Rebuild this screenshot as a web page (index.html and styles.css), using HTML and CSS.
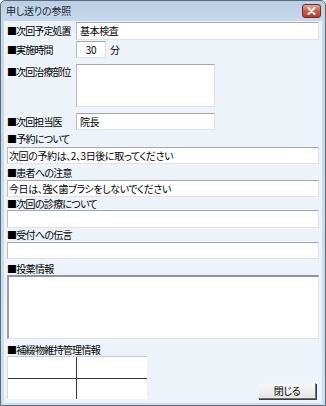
FILE: index.html
```html
<!DOCTYPE html>
<html lang="ja">
<head>
<meta charset="UTF-8">
<title>申し送りの参照</title>
<link rel="stylesheet" href="styles.css">
</head>
<body>

<!-- Dialog Window -->
<div class="window">
    <div class="titlebar">
        <span class="title">申し送りの参照</span>
        <span class="close">
            <svg width="9" height="8" viewBox="0 0 9 8"><path d="M1.5 1 L7.5 7 M7.5 1 L1.5 7" stroke="#fff" stroke-width="2" stroke-linecap="round"/></svg>
        </span>
    </div>

    <div class="client">
        <div class="row r1">
            <label class="lbl">■次回予定処置</label>
            <div class="box wide">基本検査</div>
        </div>

        <div class="row r2">
            <label class="lbl">■実施時間</label>
            <div class="box num">30</div>
            <span class="unit">分</span>
        </div>

        <div class="row r3">
            <label class="lbl">■次回治療部位</label>
            <div class="box mid tall"></div>
        </div>

        <div class="row r4">
            <label class="lbl">■次回担当医</label>
            <div class="box mid">院長</div>
        </div>

        <div class="block b1">
            <label class="head">■予約について</label>
            <div class="box full">次回の予約は、2、3日後に取ってください</div>
        </div>

        <div class="block b2">
            <label class="head">■患者への注意</label>
            <div class="box full">今日は、強く歯ブラシをしないでください</div>
        </div>

        <div class="block b3">
            <label class="head">■次回の診療について</label>
            <div class="box full h18"></div>
        </div>

        <div class="block b4">
            <label class="head">■受付への伝言</label>
            <div class="box full"></div>
        </div>

        <div class="block b5">
            <label class="head">■投薬情報</label>
            <div class="box full memo"></div>
        </div>

        <div class="bottom">
            <div class="block">
                <label class="head">■補綴物維持管理情報</label>
                <div class="grid">
                    <div class="cell"></div>
                    <div class="cell"></div>
                    <div class="cell"></div>
                    <div class="cell"></div>
                </div>
            </div>
            <button class="btn">閉じる</button>
        </div>
    </div>
</div>

</body>
</html>
```

FILE: styles.css
```css
/* General */
* {
    margin: 0;
    padding: 0;
    box-sizing: border-box;
}

body {
    width: 326px;
    height: 406px;
    overflow: hidden;
    font-family: "Noto Sans CJK JP", "Liberation Sans", sans-serif;
    font-size: 10px;
    font-feature-settings: "palt" 1;
    letter-spacing: -0.4px;
    color: #000;
    background: #fff;
}

/* Window frame */
.window {
    width: 326px;
    height: 406px;
    border: 1px solid #5b6b7c;
    border-radius: 5px 5px 0 0;
    background: linear-gradient(to bottom, #bcd0e5, #c6d9ec 20px, #cddff1);
    padding: 0 3px 2px 3px;
    display: flex;
    flex-direction: column;
}

.titlebar {
    flex-shrink: 0;
    height: 20px;
    display: flex;
    align-items: center;
    justify-content: space-between;
    padding: 0 1px 0 2px;
}

.title {
    color: #1b2633;
    line-height: 1;
    letter-spacing: -0.2px;
}

.close {
    width: 19px;
    height: 14px;
    border: 1px solid #6c2a20;
    border-radius: 3px;
    background: linear-gradient(to bottom, #e8a592, #d0634c 45%, #b83c24);
    display: flex;
    align-items: center;
    justify-content: center;
}

/* Client area */
.client {
    flex: 1;
    min-height: 0;
    overflow: hidden;
    background: #edf3f9;
    padding: 0 3px 0 3px;
    display: flex;
    flex-direction: column;
}

.row {
    display: flex;
    align-items: center;
    flex-shrink: 0;
}

.lbl {
    width: 69px;
    line-height: 12px;
    letter-spacing: -0.9px;
    white-space: nowrap;
}

.head {
    display: block;
    line-height: 12px;
    height: 12px;
    letter-spacing: -0.7px;
    white-space: nowrap;
}

/* Text boxes */
.box {
    flex-shrink: 0;
    background: #fff;
    border: 1px solid #dfe3e8;
    border-top-color: #a3a8ae;
    border-left-color: #b9bdc2;
    height: 17px;
    padding: 0 3px;
    line-height: 15px;
    white-space: nowrap;
    overflow: hidden;
}

.wide { width: 243px; height: 18px; line-height: 16px; }
.mid { width: 139px; }
.tall { height: 43px; }
.full { width: 312px; padding: 0 1px; }
.h18 { height: 18px; }
.memo {
    height: 64px;
    border-top: 2px solid #8e949b;
    border-left: 2px solid #9aa0a6;
}

.num {
    width: 30px;
    text-align: center;
}

.unit {
    margin-left: 4px;
}

.r1 { margin-top: 1px; }
.r2 { margin-top: 1px; }
.r3 { margin-top: 6px; align-items: flex-start; }
.r3 .lbl { margin-top: 2px; }
.r4 { margin-top: 6px; }

.b1 { margin-top: 3px; }
.b1 .head { margin-bottom: 2px; }
.b2 { margin-top: 3px; }
.b2 .head { margin-bottom: 1px; }
.b3 { margin-top: 1px; }
.b4 { margin-top: 1px; }
.b4 .head { margin-bottom: 1px; }
.b5 { margin-top: 4px; }

/* Bottom: prosthesis grid + close button */
.bottom {
    margin-top: 5px;
    display: flex;
    justify-content: space-between;
    align-items: flex-end;
}

.grid {
    width: 140px;
    height: 43px;
    background: #fff;
    border-top: 1px solid #c9cdd2;
    border-left: 1px solid #d5d9de;
    display: grid;
    grid-template-columns: 69px 70px;
    grid-template-rows: 22px 20px;
}

.cell:nth-child(1) { border-right: 1px solid #3a3a3a; border-bottom: 1px solid #3a3a3a; }
.cell:nth-child(2) { border-bottom: 1px solid #3a3a3a; }
.cell:nth-child(3) { border-right: 1px solid #3a3a3a; }

.btn {
    width: 58px;
    height: 16px;
    margin-right: 3px;
    font-family: inherit;
    font-size: 10px;
    font-feature-settings: "palt" 1;
    letter-spacing: -0.4px;
    line-height: 14px;
    background: linear-gradient(to bottom, #f7f7f7, #e6e6e6);
    border: 1px solid #707070;
    border-top-color: #f4f4f4;
    border-left-color: #f4f4f4;
    box-shadow: 1px 1px 0 #3c3c3c;
    color: #000;
}
```
